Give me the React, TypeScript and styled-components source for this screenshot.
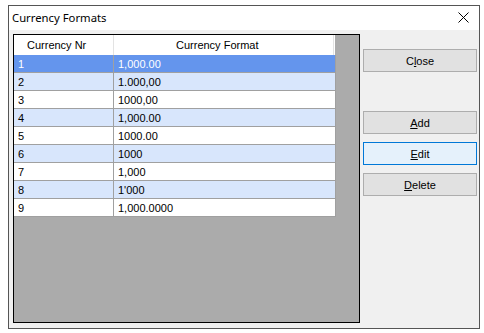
import React, { useState } from 'react';
import styled, { createGlobalStyle } from 'styled-components';

const GlobalStyle = createGlobalStyle`
  html, body {
    margin: 0;
    background: #ffffff;
  }
  #root {
    padding: 5px 0 0 8px;
  }
`;

const Window = styled.div`
  width: 472px;
  height: 324px;
  box-sizing: border-box;
  border: 1px solid #555555;
  display: flex;
  flex-direction: column;
  background: #f0f0f0;
`;

const TitleBar = styled.div`
  height: 24px;
  flex: none;
  background: #ffffff;
  display: flex;
  align-items: center;
  justify-content: space-between;
  padding: 0 10px 0 3px;
  font-family: 'Noto Sans', 'Open Sans', sans-serif;
  font-size: 11.3px;
  color: #000;
`;

const Title = styled.span`
  margin-top: -1px;
`;

const CloseGlyph = styled.svg`
  width: 11px;
  height: 11px;
  margin-top: -1px;
`;

const Body = styled.div`
  flex: 1;
  display: flex;
  padding: 4px 0 0 4px;
  gap: 3px;
`;

const Grid = styled.div`
  width: 347px;
  height: 289px;
  box-sizing: border-box;
  border: 1px solid #000;
  background: #ababab;
  font-family: 'Liberation Sans', Arial, sans-serif;
  font-size: 11px;
`;

const Row = styled.div<{ $bg: string; $fg: string }>`
  display: grid;
  grid-template-columns: 100px 219px;
  width: 321px;
  height: 17px;
  background: ${(p) => p.$bg};
  color: ${(p) => p.$fg};
  border-bottom: 1px solid #a0a0a0;
  border-right: 1px solid #a0a0a0;
`;

const HeaderRow = styled.div`
  display: grid;
  grid-template-columns: 100px 220px;
  width: 321px;
  height: 20px;
  background: #ffffff;
  color: #000;
`;

const HeaderCell = styled.div<{ $pad: number }>`
  display: flex;
  align-items: center;
  padding-left: ${(p) => p.$pad}px;
  border-right: 1px solid #e3e3e3;
`;

const Cell = styled.div<{ $divider?: boolean }>`
  display: flex;
  align-items: center;
  padding-left: 4px;
  border-right: ${(p) => (p.$divider ? '1px solid #a0a0a0' : 'none')};
  white-space: nowrap;
`;

const Buttons = styled.div`
  display: flex;
  flex-direction: column;
  padding-top: 15px;
  width: 114px;
`;

const Button = styled.button<{ $focused?: boolean; $spaced?: number }>`
  height: 23px;
  width: 114px;
  margin-top: ${(p) => p.$spaced ?? 0}px;
  box-sizing: border-box;
  border: 1px solid ${(p) => (p.$focused ? '#0078d7' : '#adadad')};
  background: ${(p) => (p.$focused ? '#e5f1fb' : '#e1e1e1')};
  font-family: 'Liberation Sans', Arial, sans-serif;
  font-size: 11px;
  color: #000;
  padding: 0;
  outline: none;
`;

const formats = [
  '1,000.00',
  '1.000,00',
  '1000,00',
  '1,000.00',
  '1000.00',
  '1000',
  '1,000',
  "1'000",
  '1,000.0000',
];

function rowColors(index: number, selected: number) {
  if (index === selected) return { bg: '#6495ed', fg: '#ffffff' };
  return index % 2 === 1 ? { bg: '#d8e6fc', fg: '#000' } : { bg: '#ffffff', fg: '#000' };
}

const Mnemonic = ({ text }: { text: string }) => {
  const [first, ...rest] = text;
  return (
    <span>
      <u>{first}</u>
      {rest.join('')}
    </span>
  );
};

export default function App() {
  const [selected, setSelected] = useState(0);

  return (
    <>
      <GlobalStyle />
      <Window>
        <TitleBar>
          <Title>Currency Formats</Title>
          <CloseGlyph viewBox="0 0 11 11">
            <path d="M0.5 0.5 L10.5 10.5 M10.5 0.5 L0.5 10.5" stroke="#000" strokeWidth="1" fill="none" />
          </CloseGlyph>
        </TitleBar>
        <Body>
          <Grid>
            <HeaderRow>
              <HeaderCell $pad={13}>Currency Nr</HeaderCell>
              <HeaderCell $pad={62}>Currency Format</HeaderCell>
            </HeaderRow>
            {formats.map((f, i) => {
              const c = rowColors(i, selected);
              return (
                <Row key={i} $bg={c.bg} $fg={c.fg} onClick={() => setSelected(i)}>
                  <Cell $divider>{i + 1}</Cell>
                  <Cell>{f}</Cell>
                </Row>
              );
            })}
          </Grid>
          <Buttons>
            <Button>
              C<u>l</u>ose
            </Button>
            <Button $spaced={39}>
              <Mnemonic text="Add" />
            </Button>
            <Button $spaced={8} $focused>
              <Mnemonic text="Edit" />
            </Button>
            <Button $spaced={8}>
              <Mnemonic text="Delete" />
            </Button>
          </Buttons>
        </Body>
      </Window>
    </>
  );
}
